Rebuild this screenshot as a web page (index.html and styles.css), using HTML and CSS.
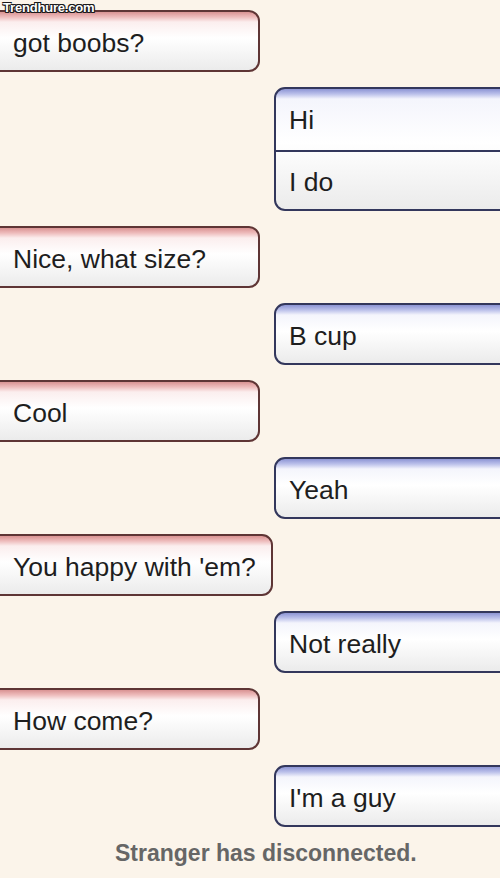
FILE: index.html
```html
<!DOCTYPE html>
<html lang="en">
  <head>
    <meta charset="UTF-8" />
    <title>Chat</title>
    <link rel="stylesheet" href="styles.css">
  </head>
  <body>
    <div class="watermark">Trendhure.com</div>

    <div class="chat">
      <div class="msg stranger">got boobs?</div>
      <div class="msg you multi">
        <div class="line">Hi</div>
        <div class="line">I do</div>
      </div>
      <div class="msg stranger">Nice, what size?</div>
      <div class="msg you">B cup</div>
      <div class="msg stranger">Cool</div>
      <div class="msg you">Yeah</div>
      <div class="msg stranger">You happy with 'em?</div>
      <div class="msg you">Not really</div>
      <div class="msg stranger">How come?</div>
      <div class="msg you">I'm a guy</div>
    </div>

    <div class="status">Stranger has disconnected.</div>
  </body>
</html>
```

FILE: styles.css
```css
body {
  margin: 0;
  background: #fbf4ea;
  font-family: "Liberation Sans", Arial, sans-serif;
  overflow: hidden;
}

.watermark {
  position: absolute;
  top: 1px;
  left: 3px;
  font-size: 13px;
  line-height: 13px;
  font-weight: bold;
  color: #fff;
  letter-spacing: -0.2px;
  text-shadow: -1px -1px 0 #1a1a1a, 1px -1px 0 #1a1a1a, -1px 1px 0 #1a1a1a,
    1px 1px 0 #1a1a1a, 0 1px 0 #1a1a1a, 0 -1px 0 #1a1a1a;
  z-index: 2;
}

.chat {
  display: flex;
  flex-direction: column;
  gap: 15px;
  padding-top: 10px;
}

.msg {
  height: 62px;
  line-height: 58px;
  padding-top: 2px;
  font-size: 26.5px;
  color: #1e1e1e;
  border: 2px solid #5e3535;
  border-radius: 11px;
  box-sizing: border-box;
}

.stranger {
  align-self: flex-start;
  min-width: 272px;
  margin-left: -12px;
  padding-left: 23px;
  padding-right: 15px;
  background: linear-gradient(#d99393 0, #eebcbc 5px, #fbeeee 10px, #ffffff 45%, #ebebeb 100%);
}

.you {
  margin-left: 274px;
  margin-right: -20px;
  padding-left: 13px;
  border-color: #33375c;
  background: linear-gradient(#8d95d4 0, #bbc0ea 5px, #f4f5fc 10px, #ffffff 45%, #ebebeb 100%);
}

.you.multi {
  height: 124px;
  padding: 0;
}

.line {
  height: 61px;
  line-height: 58px;
  padding: 2px 0 0 13px;
  box-sizing: border-box;
}

.line + .line {
  height: 59px;
  border-top: 2px solid #33375c;
  padding-top: 1px;
}

.status {
  padding: 13px 0 0 115px;
  font-size: 23px;
  font-weight: bold;
  color: #666;
}
```
